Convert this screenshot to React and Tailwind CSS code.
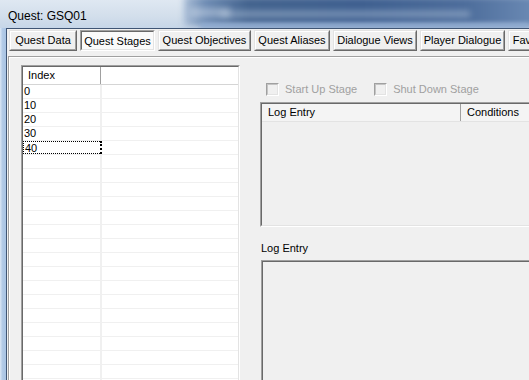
import React from "react";

const font = { fontFamily: '"Liberation Sans", Arial, sans-serif' };

const Tab = ({ label, w, active }) => {
  if (active) {
    return (
      <div className={`${w} h-[21px] shrink-0 border border-t-[#a0a0a0] border-l-[#a0a0a0] border-r-white border-b-white`}>
        <div className="h-full border border-t-[#696969] border-l-[#696969] border-r-[#e3e3e3] border-b-[#e3e3e3] bg-[#fafafa] flex items-center justify-center pt-[2px] text-[11px] text-black whitespace-nowrap overflow-hidden">
          {label}
        </div>
      </div>
    );
  }
  return (
    <div className={`${w} h-[21px] shrink-0 border border-t-[#e3e3e3] border-l-[#e3e3e3] border-r-[#696969] border-b-[#696969]`}>
      <div className="h-full border border-t-white border-l-white border-r-[#a0a0a0] border-b-[#a0a0a0] bg-[#f0f0f0] flex items-center justify-center text-[11px] text-black whitespace-nowrap overflow-hidden">
        {label}
      </div>
    </div>
  );
};

const Check = ({ label }) => (
  <div className="flex items-center gap-[6px]">
    <div className="w-[13px] h-[13px] border border-t-[#a0a0a0] border-l-[#a0a0a0] border-r-white border-b-white">
      <div className="w-full h-full border border-t-[#c4c4c4] border-l-[#c4c4c4] border-r-[#e3e3e3] border-b-[#e3e3e3] bg-[#f0f0f0]" />
    </div>
    <span className="text-[11px] text-[#a0a0a0] leading-none">{label}</span>
  </div>
);

const Sunken = ({ className, children }) => (
  <div className={`shrink-0 border border-t-[#a0a0a0] border-l-[#a0a0a0] border-r-white border-b-white ${className}`}>
    <div className="h-full border border-t-[#696969] border-l-[#696969] border-r-[#e3e3e3] border-b-[#e3e3e3] overflow-hidden flex flex-col">
      {children}
    </div>
  </div>
);

const stages = ["0", "10", "20", "30", "40"];

export default function App() {
  const rows = Array.from({ length: 22 }, (_, i) => stages[i] ?? "");

  return (
    <div className="w-[529px] h-[380px] overflow-hidden flex flex-col bg-[#b9d0ea]" style={font}>
      {/* title bar */}
      <div className="h-[28px] shrink-0 flex items-stretch bg-[linear-gradient(180deg,#dfe8f2_0%,#d2deeb_60%,#c6d6e8_100%)] overflow-hidden">
        <div className="pl-[8px] pt-[7px] text-[12px] text-black whitespace-nowrap w-[180px]">Quest: GSQ01</div>
        <div className="flex-1 relative">
          <div className="absolute left-[4px] right-[-10px] top-[-4px] bottom-[2px] blur-[3px] bg-[linear-gradient(90deg,#a9bdd6_0%,#6d8bb3_6%,#44648f_18%,#3f6090_50%,#4e6e9c_80%,#6d8cb6_100%)]" />
          <div className="absolute left-[20px] right-0 bottom-0 h-[5px] blur-[2px] bg-[#8eaad0]" />
          <div className="absolute left-[40px] top-[11px] h-[6px] w-[250px] bg-[#b9cadf] opacity-50 blur-[3px]" />
          <div className="absolute left-[10px] top-[8px] h-[9px] w-[40px] bg-[#dce6f1] opacity-40 blur-[3px]" />
        </div>
      </div>

      {/* client */}
      <div className="flex-1 flex min-h-0">
        <div className="w-[6px] shrink-0 bg-[linear-gradient(90deg,#dbe7f5_0%,#b3cbe7_40%,#a9c4e4_100%)]" />
        <div className="flex-1 flex flex-col min-w-0 border-l border-t border-[#3f5574] bg-[#f0f0f0]">
          {/* tab buttons */}
          <div className="flex gap-[3px] pl-[2px] pt-[1px]">
            <Tab label="Quest Data" w="w-[68px]" />
            <Tab label="Quest Stages" w="w-[75px]" active />
            <Tab label="Quest Objectives" w="w-[93px]" />
            <Tab label="Quest Aliases" w="w-[76px]" />
            <Tab label="Dialogue Views" w="w-[84px]" />
            <Tab label="Player Dialogue" w="w-[85px]" />
            <Tab label="Favor Dialogue" w="w-[84px]" />
          </div>

          {/* tab page */}
          <div className="flex-1 mt-[5px] ml-[1px] border-l border-t border-[#a0a0a0] min-h-0">
            <div className="h-full border-l border-t border-white flex pl-[11px] pt-[7px]">
              {/* stage list */}
              <Sunken className="w-[219px] h-[330px] bg-white">
                <div className="flex h-[18px] shrink-0 border-b border-[#d5d5d5] bg-white text-[11px] text-black">
                  <div className="w-[78px] pl-[5px] flex items-center border-r border-[#a0a0a0]">Index</div>
                  <div className="flex-1" />
                </div>
                {rows.map((r, i) => (
                  <div key={i} className="flex h-[14px] shrink-0 border-b border-[#f0f0f0] text-[11px] leading-[13px] text-black">
                    <div
                      className={`w-[79px] pl-[1px] border-r-2 ${
                        i === 4 ? "border border-dotted border-black pl-0 border-r-black" : "border-[#f0f0f0]"
                      }`}
                    >
                      {r}
                    </div>
                    <div className="flex-1" />
                  </div>
                ))}
              </Sunken>

              {/* right side */}
              <div className="flex-1 flex flex-col ml-[20px] pt-[17px] min-w-[300px]">
                <div className="flex items-center gap-[17px] pl-[6px] h-[15px] shrink-0">
                  <Check label="Start Up Stage" />
                  <Check label="Shut Down Stage" />
                </div>

                <Sunken className="mt-[5px] h-[125px] w-[290px] bg-[#f0f0f0]">
                  <div className="flex h-[18px] shrink-0 border-b border-[#e3e3e3] text-[11px] text-black bg-[#f4f4f4]">
                    <div className="w-[199px] pl-[6px] flex items-center border-r border-[#a0a0a0]">Log Entry</div>
                    <div className="flex-1 pl-[6px] flex items-center whitespace-nowrap">Conditions</div>
                  </div>
                </Sunken>

                <div className="mt-[13px] pl-[1px] text-[11px] text-black h-[14px] shrink-0">Log Entry</div>

                <Sunken className="mt-[6px] ml-[1px] h-[140px] w-[290px] bg-[#f0f0f0]" />
              </div>
            </div>
          </div>
        </div>
      </div>
    </div>
  );
}
